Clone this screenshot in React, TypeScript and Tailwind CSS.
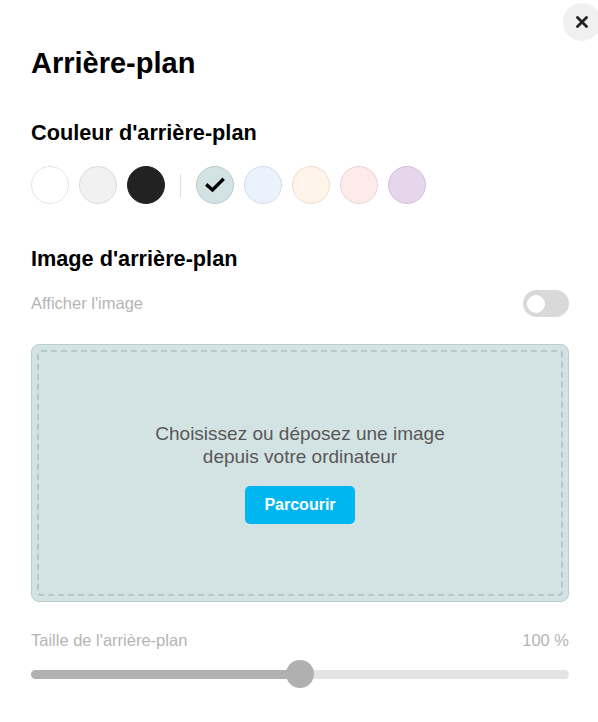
import { useState } from 'react'

const swatches = [
  { bg: 'bg-[#ffffff]', border: 'border-[#e6e6e6]' },
  { bg: 'bg-[#f1f1f1]', border: 'border-[#dcdcdc]' },
  { bg: 'bg-[#222222]', border: 'border-[#222222]' },
]

const tints = [
  { bg: 'bg-[#d3e3e3]', border: 'border-[#b7cccc]' },
  { bg: 'bg-[#eaf2fb]', border: 'border-[#d0dcea]' },
  { bg: 'bg-[#fff4ea]', border: 'border-[#efdccb]' },
  { bg: 'bg-[#fdebec]', border: 'border-[#ebd2d4]' },
  { bg: 'bg-[#e6d6ec]', border: 'border-[#d3c0dc]' },
]

function Swatch({ bg, border, selected }: { bg: string; border: string; selected?: boolean }) {
  return (
    <button className={`flex items-center justify-center w-[38px] h-[38px] rounded-full border ${bg} ${border}`}>
      {selected && (
        <svg width="20" height="16" viewBox="0 0 20 16" fill="none">
          <path d="M2.5 8.5 L7.5 13 L17.5 3" stroke="#000" strokeWidth="3.4" strokeLinecap="square" />
        </svg>
      )}
    </button>
  )
}

export default function App() {
  const [selected] = useState(3)
  const size = 50

  return (
    <div className="relative w-[598px] h-[722px] bg-white overflow-hidden font-['Liberation_Sans',Arial,sans-serif]">
      <button
        className="absolute top-[3px] left-[563px] flex items-center justify-center w-[38px] h-[38px] rounded-full bg-[#f0f0f0]"
        aria-label="Fermer"
      >
        <svg width="12" height="12" viewBox="0 0 12 12" fill="none">
          <path d="M1.5 1.5 L10.5 10.5 M10.5 1.5 L1.5 10.5" stroke="#222" strokeWidth="2.8" strokeLinecap="round" />
        </svg>
      </button>

      <div className="flex flex-col pl-[31px] pr-[29px] pt-[47px]">
        <h1 className="text-[29px] leading-[33px] font-bold text-black">Arrière-plan</h1>

        <h2 className="mt-[40px] text-[21.7px] leading-[26px] font-bold text-black">Couleur d'arrière-plan</h2>
        <div className="mt-[20px] flex items-center gap-[10px]">
          {swatches.map((s, i) => (
            <Swatch key={i} bg={s.bg} border={s.border} selected={selected === i} />
          ))}
          <div className="mx-[5px] w-px h-[23px] bg-[#dddddd]" />
          {tints.map((s, i) => (
            <Swatch key={i} bg={s.bg} border={s.border} selected={selected === i + 3} />
          ))}
        </div>

        <h2 className="mt-[42px] text-[21.7px] leading-[26px] font-bold text-black">Image d'arrière-plan</h2>
        <div className="mt-[18px] flex items-center justify-between h-[27px]">
          <span className="text-[16.5px] text-[#b5b5b5]">Afficher l'image</span>
          <div className="flex items-center w-[46px] h-[27px] rounded-full bg-[#d9d9d9] px-[4px]">
            <div className="w-[18px] h-[18px] rounded-full bg-white" />
          </div>
        </div>

        <div className="mt-[27px] h-[258px] rounded-[8px] border border-[#b9cfcf] bg-[#d3e3e3] p-[5px]">
          <div className="flex flex-col items-center justify-center h-full rounded-[4px] border-2 border-dashed border-[#b4c9c9]">
            <p className="text-center text-[19px] leading-[23px] text-[#585858]">
              Choisissez ou déposez une image
              <br />
              depuis votre ordinateur
            </p>
            <button className="mt-[18px] h-[38px] px-[19px] rounded-[5px] bg-[#00b6f0] text-white text-[16px] font-bold">
              Parcourir
            </button>
          </div>
        </div>

        <div className="mt-[28px] flex items-center justify-between h-[20px] text-[16.5px] text-[#b5b5b5]">
          <span>Taille de l'arrière-plan</span>
          <span>100 %</span>
        </div>

        <div className="mt-[10px] relative h-[28px] flex items-center">
          <div className="w-full h-[9px] rounded-full bg-[#e4e4e4] overflow-hidden">
            <div className="h-full bg-[#b0b0b0]" style={{ width: `${size}%` }} />
          </div>
          <div
            className="absolute top-0 w-[28px] h-[28px] -ml-[14px] rounded-full bg-[#b0b0b0]"
            style={{ left: `${size}%` }}
          />
        </div>
      </div>
    </div>
  )
}
